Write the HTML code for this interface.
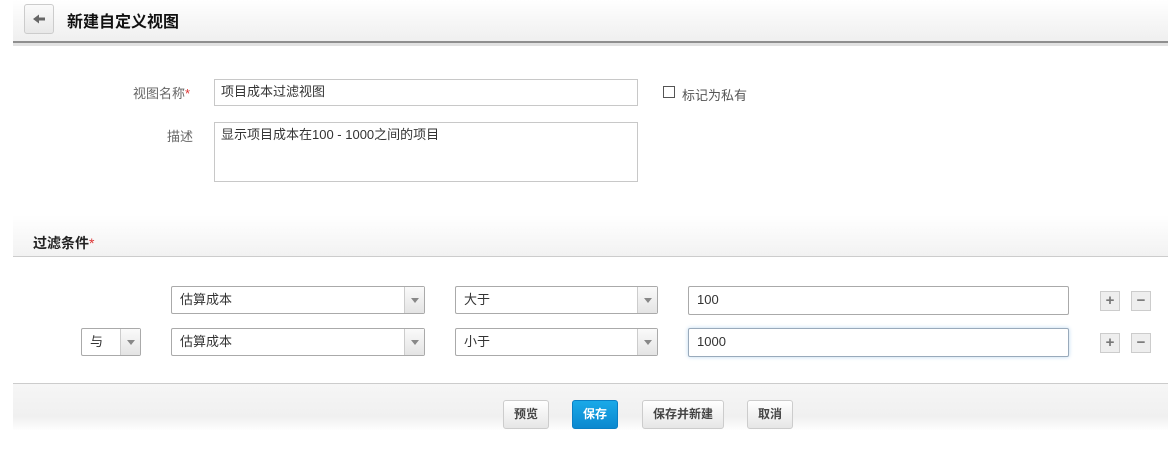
<!DOCTYPE html>
<html><head><meta charset="utf-8"><style>
*{box-sizing:border-box;margin:0;padding:0}
body{width:1168px;height:456px;background:#fff;position:relative;font-family:"Liberation Sans","Noto Sans CJK SC",sans-serif;font-size:13px;color:#333;overflow:hidden}
.a{position:absolute}
.hdr{left:13px;top:0;width:1155px;height:41px;background:linear-gradient(#fff,#efefef)}
.back{left:24px;top:4px;width:30px;height:30px;border:1px solid #ccc;border-radius:3px;background:linear-gradient(#fafafa,#e8e8e8)}
.inp{border:1px solid #c8c8c8;background:#fff;padding:0 6px;line-height:24px;color:#333}
.sel{border:1px solid #aaa;border-radius:2px;background:#fff;line-height:26px;padding-left:8px}
.sel .ar{position:absolute;right:0;top:0;bottom:0;width:20px;border-left:1px solid #ccc;background:linear-gradient(#fafafa,#e4e4e4)}
.sel .ar:after{content:"";position:absolute;left:6px;top:11px;border:4px solid transparent;border-top:5px solid #888;border-bottom:0}
.pm{width:20px;height:20px;border:1px solid #ccc;background:#eee;color:#777;font-weight:bold;text-align:center;line-height:18px;font-size:15px}
.btn{top:400px;height:29px;border:1px solid #ccc;border-radius:3px;background:linear-gradient(#fff,#e6e6e6);font-weight:bold;text-align:center;line-height:27px;font-size:12px;color:#444}
</style></head><body>
<div class="a hdr"></div>
<div class="a back"><svg width="28" height="28" style="position:absolute;left:0;top:0"><path d="M8 14 L14 9.5 L14 12.5 L20 12.5 L20 15.5 L14 15.5 L14 18.5 Z" fill="#666"/></svg></div>
<div class="a" style="left:67px;top:8px;font-size:16px;font-weight:bold;color:#111">新建自定义视图</div>
<div class="a" style="left:13px;top:41px;width:1155px;height:2px;background:#8f8f8f"></div>
<div class="a" style="left:13px;top:43px;width:1155px;height:3px;background:#e2e2e2"></div>

<div class="a" style="left:133px;top:83px;color:#666">视图名称<span style="color:#d33">*</span></div>
<div class="a inp" style="left:214px;top:79px;width:424px;height:27px">项目成本过滤视图</div>
<div class="a" style="left:663px;top:86px;width:12px;height:12px;border:1px solid #555"></div>
<div class="a" style="left:682px;top:85px;color:#555">标记为私有</div>
<div class="a" style="left:167px;top:126px;color:#666">描述</div>
<div class="a inp" style="left:214px;top:122px;width:424px;height:60px;line-height:20px;padding-top:2px">显示项目成本在100 - 1000之间的项目</div>

<div class="a" style="left:13px;top:215px;width:1155px;height:42px;background:linear-gradient(#fff,#f2f2f2);border-bottom:1px solid #ccc"></div>
<div class="a" style="left:33px;top:233px;font-size:14px;font-weight:bold;color:#222">过滤条件<span style="color:#d33;font-weight:normal">*</span></div>

<div class="a sel" style="left:171px;top:286px;width:254px;height:28px">估算成本<div class="ar"></div></div>
<div class="a sel" style="left:455px;top:286px;width:203px;height:28px">大于<div class="ar"></div></div>
<div class="a sel" style="left:688px;top:286px;width:381px;height:29px">100</div>
<div class="a pm" style="left:1100px;top:291px">+</div>
<div class="a pm" style="left:1131px;top:291px">−</div>

<div class="a sel" style="left:81px;top:328px;width:60px;height:28px">与<div class="ar"></div></div>
<div class="a sel" style="left:171px;top:328px;width:254px;height:28px">估算成本<div class="ar"></div></div>
<div class="a sel" style="left:455px;top:328px;width:203px;height:28px">小于<div class="ar"></div></div>
<div class="a sel" style="left:688px;top:328px;width:381px;height:29px;border-color:#9ab;box-shadow:0 0 4px #bcd8ef">1000</div>
<div class="a pm" style="left:1100px;top:333px">+</div>
<div class="a pm" style="left:1131px;top:333px">−</div>

<div class="a" style="left:13px;top:383px;width:1155px;height:48px;border-top:1px solid #ccc;background:linear-gradient(#f6f6f6,#f0f0f0 70%,#fff)"></div>
<div class="a btn" style="left:503px;width:46px">预览</div>
<div class="a btn" style="left:572px;width:46px;background:linear-gradient(#1aa9e8,#0b88cf);border-color:#0a7fc4;color:#fff">保存</div>
<div class="a btn" style="left:642px;width:82px">保存并新建</div>
<div class="a btn" style="left:747px;width:46px">取消</div>
</body></html>
